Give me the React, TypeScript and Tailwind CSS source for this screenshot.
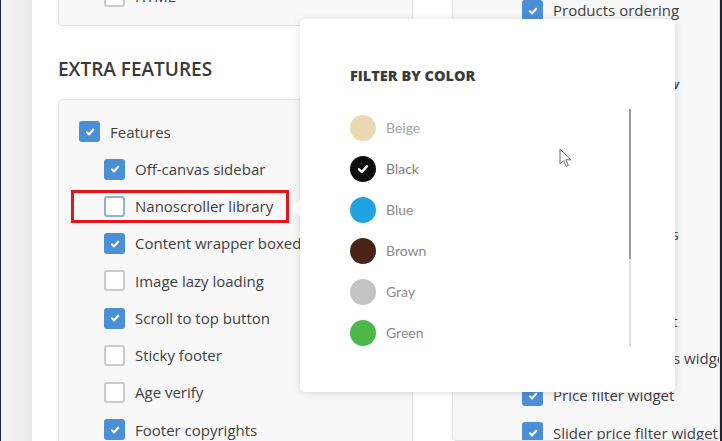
import clsx from 'clsx';

type Opt = { label: string; on?: boolean; focus?: boolean; gap?: boolean; note?: boolean; tight?: boolean };

function Box({ on, focus }: { on?: boolean; focus?: boolean }) {
  if (on) {
    return (
      <span className="flex h-[21px] w-[21px] shrink-0 items-center justify-center rounded-[3px] bg-[#4b8fd6]">
        <svg width="12" height="12" viewBox="0 0 12 12">
          <path d="M2.9 6.3 5.1 8.4 9.2 3.7" fill="none" stroke="#fff" strokeWidth="2.1" strokeLinecap="round" strokeLinejoin="round" />
        </svg>
      </span>
    );
  }
  return (
    <span
      className={clsx(
        'h-[21px] w-[21px] shrink-0 rounded-[3px] border-2 bg-white',
        focus ? 'border-[#8cb2e0]' : 'border-[#cbcbcb]'
      )}
    />
  );
}

function Option({ label, on, focus, gap, note, tight, children }: Opt & { children?: React.ReactNode }) {
  return (
    <div className={clsx('relative flex h-[37.25px] items-center gap-[10px]', gap && 'mt-[12.5px]')}>
      <Box on={on} focus={focus} />
      <span
        className={clsx(
          'whitespace-nowrap text-[#3f3f3f]',
          note ? 'text-[13px] font-semibold italic' : 'text-[15px]',
          tight && 'tracking-[-0.3px]'
        )}
      >
        {label}
      </span>
      {children}
    </div>
  );
}

const features: Opt[] = [
  { label: 'Off-canvas sidebar', on: true },
  { label: 'Nanoscroller library', focus: true },
  { label: 'Content wrapper boxed', on: true },
  { label: 'Image lazy loading' },
  { label: 'Scroll to top button', on: true },
  { label: 'Sticky footer' },
  { label: 'Age verify' },
  { label: 'Footer copyrights', on: true },
];

const shop: Opt[] = [
  { label: 'Products ordering', on: true },
  { label: 'Catalog mode', on: true },
  { label: 'Product grid/list view', note: true },
  { label: 'Quick view', on: true },
  { label: 'Quick shop', on: true },
  { label: 'Wishlist', on: true },
  { label: 'Product categories', on: true, tight: true },
  { label: 'Product filters', on: true, gap: true },
  { label: 'Categories widget', on: true },
  { label: 'Product attributes widget', on: true },
  { label: 'Price filter widget', on: true },
  { label: 'Slider price filter widget', on: true },
];

const colors = [
  { name: 'Beige', hex: 'bg-[#ead8b3]', text: 'text-[#a3a3a3]' },
  { name: 'Black', hex: 'bg-[#0d0d0d]', text: 'text-[#7d7d7d]', active: true },
  { name: 'Blue', hex: 'bg-[#1fa4e1]', text: 'text-[#8a8a8a]' },
  { name: 'Brown', hex: 'bg-[#4a2317]', text: 'text-[#8a8a8a]' },
  { name: 'Gray', hex: 'bg-[#c3c3c3]', text: 'text-[#8a8a8a]' },
  { name: 'Green', hex: 'bg-[#4cb848]', text: 'text-[#8a8a8a]' },
  { name: 'Orange', hex: 'bg-[#f39c1f]', text: 'text-[#8a8a8a]' },
  { name: 'Red', hex: 'bg-[#e23b3b]', text: 'text-[#8a8a8a]' },
];

export default function App() {
  return (
    <div className="relative flex h-[441px] w-[722px] overflow-hidden bg-white font-['Open_Sans',sans-serif]">
      <div className="w-px shrink-0 bg-[#1f232b]" />
      <div className="w-[31px] shrink-0 bg-linear-to-r from-[#f4f4f4] to-[#e9e9e9]" />

      <div className="flex min-w-0 flex-1 gap-[39px] overflow-hidden pl-[26px]">
        {/* left column */}
        <div className="w-[355px] shrink-0">
          <div className="-mt-[40px] rounded-[4px] border border-[#e2e2e2] bg-[#f8f8f8] pt-[17px] pb-[10px] pl-[45px]">
            <Option label="HTML" />
          </div>
          <h2 className="mt-[31px] mb-[18px] text-[19px] leading-[24px] font-semibold uppercase text-[#3a3a3a]">
            Extra features
          </h2>
          <div className="rounded-[4px] border border-[#e2e2e2] bg-[#f8f8f8] pt-[13px] pb-[40px] pl-[20px]">
            <Option label="Features" on />
            <div className="pl-[25px]">
              {features.map((f) => (
                <Option key={f.label} {...f}>
                  {f.focus && (
                    <span className="absolute -left-[33px] top-[2px] h-[33px] w-[218px] border-[3px] border-[#e8141c]" />
                  )}
                </Option>
              ))}
            </div>
          </div>
        </div>

        {/* right column */}
        <div className="-mt-[20px] min-w-0 flex-1 self-stretch overflow-hidden rounded-[4px] border border-[#e2e2e2] bg-[#f7f7f7] pt-[11px] pl-[69px]">
          {shop.map((s) => (
            <Option key={s.label} {...s} />
          ))}
        </div>
      </div>

      <div className="w-[2px] shrink-0 bg-[#1f232b]" />

      {/* filter popup */}
      <div className="absolute left-[300px] top-[19px] h-[373px] w-[375px] rounded-[5px] bg-white pt-[47px] pl-[50px] shadow-[0_1px_8px_rgba(0,0,0,0.13)]">
        <span className="absolute -left-[8px] top-[181px] h-0 w-0 border-y-[8px] border-r-[8px] border-y-transparent border-r-white" />
        <h3 className="mb-[21px] text-[14.5px] leading-[20px] font-extrabold uppercase text-[#3b3b3b]">Filter by color</h3>
        <div className="flex h-[240px] w-[281px]">
          <ul className="flex-1 overflow-hidden font-['Lato',sans-serif]">
            {colors.map((c) => (
              <li key={c.name} className="flex h-[41px] items-center gap-[10px]">
                <span className={clsx('flex h-[26px] w-[26px] items-center justify-center rounded-full', c.hex)}>
                  {c.active && (
                    <svg width="14" height="14" viewBox="0 0 14 14">
                      <path d="M3 7.3 5.8 10 11 4.2" fill="none" stroke="#fff" strokeWidth="2.4" strokeLinecap="round" strokeLinejoin="round" />
                    </svg>
                  )}
                </span>
                <span className={clsx('text-[14px]', c.text)}>{c.name}</span>
              </li>
            ))}
          </ul>
          <div className="mt-[2px] flex w-[2px] flex-col">
            <div className="h-[150px] bg-[#9b9b9b]" />
            <div className="flex-1 bg-[#dddddd]" />
          </div>
        </div>
      </div>

      {/* mouse pointer */}
      <svg className="absolute left-[559px] top-[148px]" width="13" height="20" viewBox="0 0 13 20">
        <path d="M1 1v15l3.6-3.4 2.6 5.8 2.2-1-2.6-5.6H12z" fill="#fff" stroke="#6b6b6b" strokeWidth="1" strokeLinejoin="round" />
      </svg>
    </div>
  );
}
